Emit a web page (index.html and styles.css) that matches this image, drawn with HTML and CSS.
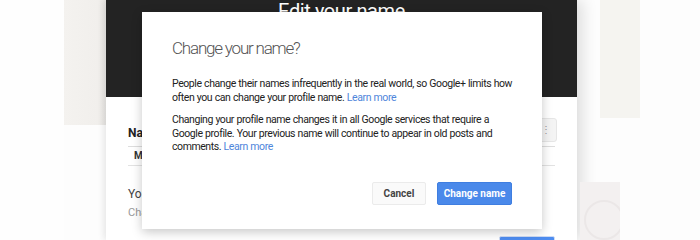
FILE: index.html
```html
<!DOCTYPE html>
<html>
<head>
<meta charset="utf-8">
<link rel="stylesheet" href="styles.css">
</head>
<body>
<div class="page">
  <div class="gutter"></div>
  <div class="side-left"></div>
  <div class="panel">
    <div class="panel-head"><h1 class="panel-title">Edit your name</h1></div>
    <div class="panel-body">
      <div class="row-top">
        <div class="label">Name</div>
        <div class="menu-btn">⋮</div>
      </div>
      <div class="field">My name</div>
      <div class="note">Your name</div>
      <div class="note-sub">Change</div>
      <div class="save-btn"></div>
    </div>
  </div>
  <div class="side-right">
    <div class="side-top"></div>
    <div class="side-card"><div class="ring"></div></div>
  </div>
</div>

<div class="dialog">
  <h2 class="dialog-title">Change your name?</h2>
  <p class="dialog-text">People change their names infrequently in the real world, so Google+ limits how often you can change your profile name. <a class="link">Learn more</a></p>
  <p class="dialog-text">Changing your profile name changes it in all Google services that require a Google profile. Your previous name will continue to appear in old posts and comments. <a class="link">Learn more</a></p>
  <div class="actions">
    <button class="btn btn-cancel">Cancel</button>
    <button class="btn btn-primary">Change name</button>
  </div>
</div>
</body>
</html>
```
FILE: styles.css
```css
* { box-sizing: border-box; }
html, body { margin: 0; padding: 0; }
body {
  width: 700px; height: 240px; overflow: hidden; position: relative;
  background: #fdfdfd;
  font-family: Roboto, "Liberation Sans", Arial, sans-serif;
}
.page { display: flex; height: 240px; }
.gutter { width: 64px; background: #fefefe; }
.side-left {
  width: 42px; height: 125px;
  background: linear-gradient(90deg, #f4f2ef, #f1efec 80%, #e9e7e4);
}
.panel {
  width: 471px; height: 240px; background: #fff;
  box-shadow: 6px 0 14px rgba(0,0,0,0.12), -3px 0 6px rgba(0,0,0,0.06);
  display: flex; flex-direction: column;
}
.panel-head {
  height: 97px; background: #232323;
  display: flex; justify-content: center;
}
.panel-title {
  margin: 0; color: #fff;
  font-weight: 400; font-size: 20px; line-height: 24px;
  letter-spacing: -0.4px;
  transform: translateY(-1px);
}
.panel-body { padding: 23px 22px 0 22px; position: relative; flex: 1; }
.row-top { display: flex; justify-content: space-between; align-items: center; height: 22px; }
.label { font-weight: 700; font-size: 12px; color: #222; margin-top: 3px; }
.menu-btn {
  width: 22px; height: 24px; margin-right: -2px; margin-top: -3px;
  border: 1px solid #e6e6e6; border-radius: 3px; background: #f4f4f4;
  color: #999; font-size: 10px; text-align: center; line-height: 22px;
}
.field {
  margin-top: 4px; height: 20px; padding-left: 6px;
  border-top: 1px solid #ddd; border-bottom: 1px solid #e2e2e2;
  font-size: 10px; font-weight: 700; color: #333; line-height: 18px;
}
.note { margin-top: 21px; font-size: 12px; color: #444; }
.note-sub { margin-top: 5px; font-size: 11px; color: #999; }
.save-btn {
  position: absolute; right: 22px; bottom: -6px;
  width: 56px; height: 10px; background: #4d8cf0; border-radius: 2px;
  border: 1px solid #cfdcf4;
}
.side-right { width: 63px; display: flex; flex-direction: column; }
.side-top {
  width: 40px; margin-left: 23px; height: 118px;
  background: #f5f4f0;
}
.side-card {
  width: 40px; margin-left: 3px; margin-top: 64px; height: 58px;
  background: #f3f0f0; position: relative; overflow: hidden;
}
.ring {
  width: 40px; height: 40px; border: 2px solid #ebe7e7; border-radius: 50%;
  margin: 18px 0 0 4px;
}

.dialog {
  position: absolute; left: 142px; top: 12px;
  width: 400px; height: 217px;
  background: #fff;
  box-shadow: 0 3px 10px rgba(0,0,0,0.22);
  padding: 25px 30px 0 30px;
}
.dialog-title {
  margin: 0 0 18px 0; font-weight: 300; font-size: 17px; line-height: 22px;
  color: #555; letter-spacing: -1.2px;
}
.dialog-text {
  margin: 0 -10px 9px 0; font-size: 10.5px; line-height: 13.5px; color: #222;
  letter-spacing: -0.42px; word-spacing: 0.3px;
}
.link { color: #4f86db; }
.actions {
  display: flex; justify-content: flex-end; gap: 11px;
  margin-top: 28px; padding-right: 0;
}
.btn {
  height: 23px; border-radius: 2px; font-family: inherit;
  font-size: 10px; padding: 0; font-weight: 700;
}
.btn-cancel {
  width: 54px; background: #fafafa; border: 1px solid #ebebeb; color: #444;
}
.btn-primary {
  width: 75px; background: #4a89ea; border: 1px solid #3f7ee0; color: #fff;
}
```
